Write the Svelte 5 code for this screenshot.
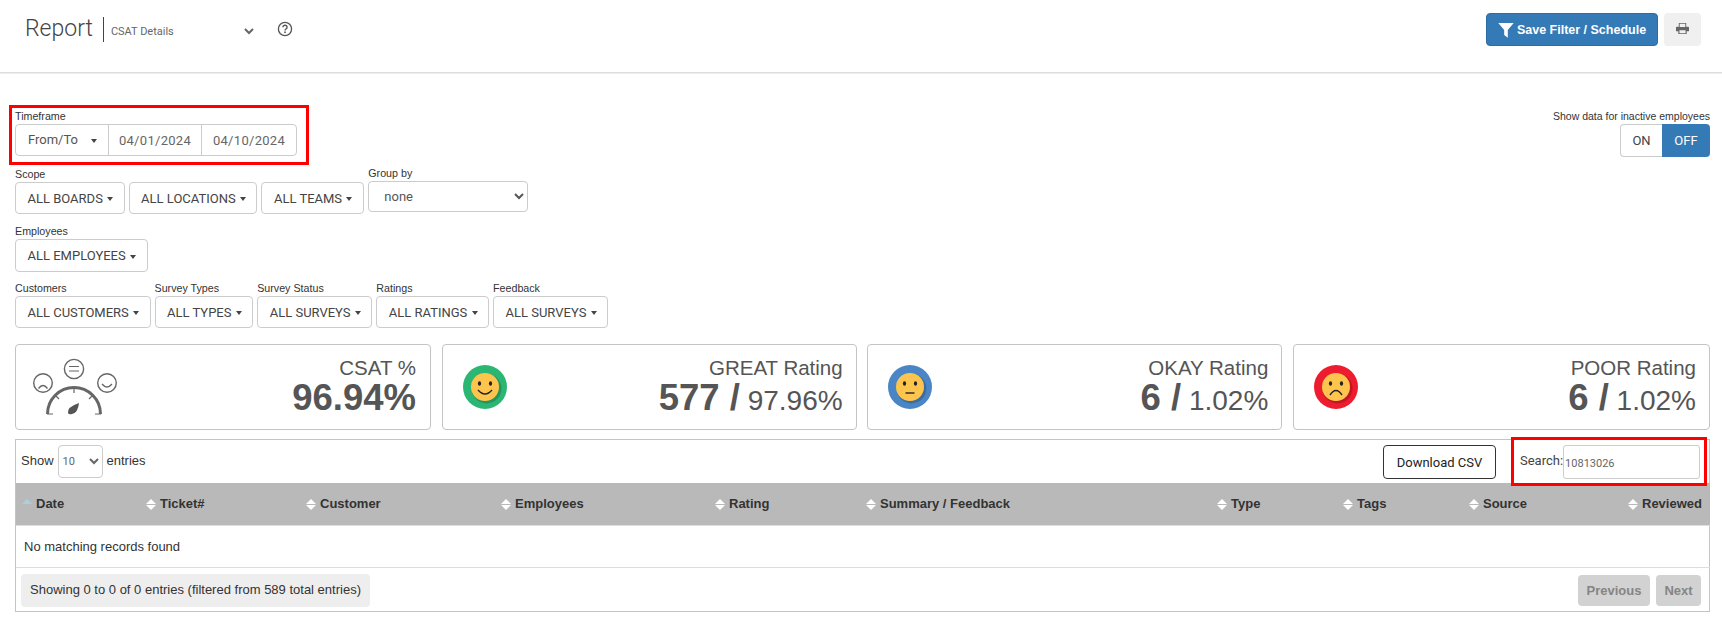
<script>
  const scopeButtons = ['ALL BOARDS', 'ALL LOCATIONS', 'ALL TEAMS'];
  const filterFields = [
    { label: 'Customers', text: 'ALL CUSTOMERS' },
    { label: 'Survey Types', text: 'ALL TYPES' },
    { label: 'Survey Status', text: 'ALL SURVEYS' },
    { label: 'Ratings', text: 'ALL RATINGS' },
    { label: 'Feedback', text: 'ALL SURVEYS' }
  ];
  const ratings = [
    { title: 'GREAT Rating', count: '577', pct: '97.96%', ring: '#2bb673', mouth: 'M-7 3 Q0 11 7 3' },
    { title: 'OKAY Rating', count: '6', pct: '1.02%', ring: '#4a86c5', mouth: 'M-4.5 6 H4.5' },
    { title: 'POOR Rating', count: '6', pct: '1.02%', ring: '#ed1c2e', mouth: 'M-6 8 Q0 -1 6 8' }
  ];
  const columns = [
    { name: 'Date', width: 124, active: true },
    { name: 'Ticket#', width: 160 },
    { name: 'Customer', width: 195 },
    { name: 'Employees', width: 214 },
    { name: 'Rating', width: 151 },
    { name: 'Summary / Feedback', width: 351 },
    { name: 'Type', width: 126 },
    { name: 'Tags', width: 126 },
    { name: 'Source', width: 159 },
    { name: 'Reviewed', width: 88 }
  ];
</script>

<header class="topbar">
  <div class="title-group">
    <h1>Report</h1>
    <span class="divider"></span>
    <select class="report-select"><option>CSAT Details</option></select>
    <svg class="help" viewBox="0 0 16 16" width="16" height="16" aria-hidden="true">
      <circle cx="8" cy="8" r="6.6" fill="none" stroke="#555" stroke-width="1.3" />
      <path d="M5.9 6.3 A2.1 2 0 1 1 8.9 8 Q8 8.5 8 9.6" fill="none" stroke="#555" stroke-width="1.4" />
      <rect x="7.2" y="10.5" width="1.6" height="1.6" fill="#555" />
    </svg>
  </div>
  <div class="top-actions">
    <button class="save">
      <svg viewBox="0 0 16 16" width="16" height="16" aria-hidden="true">
        <path d="M0.3 1 H15.7 L9.8 8 V15.8 L6.2 13 V8 Z" fill="#fff" />
      </svg>
      Save Filter / Schedule
    </button>
    <button class="print" aria-label="Print">
      <svg viewBox="0 0 14 14" width="13" height="13" aria-hidden="true">
        <path fill-rule="evenodd" d="M3 1 H11 V5 H13 Q14 5 14 6 V10 H11.5 V13 H2.5 V10 H0 V6 Q0 5 1 5 H3 Z M4 2 V5.5 H10 V2 Z M3.7 9 V12 H10.3 V9 Z" fill="#666" />
      </svg>
    </button>
  </div>
</header>

<main class="page">
  <div class="first-row">
    <div class="marked timeframe">
      <span class="label">Timeframe</span>
      <div class="date-group">
        <span class="range">From/To <i class="caret"></i></span>
        <input class="date" value="04/01/2024" readonly />
        <input class="date last" value="04/10/2024" readonly />
      </div>
    </div>
    <div class="inactive">
      <span class="label">Show data for inactive employees</span>
      <div class="toggle">
        <span class="on">ON</span>
        <span class="off">OFF</span>
      </div>
    </div>
  </div>

  <div class="filter-row scope-row">
    <div class="field">
      <span class="label">Scope</span>
      <div class="buttons">
        {#each scopeButtons as text}
          <button class="drop">{text} <i class="caret"></i></button>
        {/each}
      </div>
    </div>
    <div class="field group-by">
      <span class="label">Group by</span>
      <select class="group-select"><option>none</option></select>
    </div>
  </div>

  <div class="filter-row employees-row">
    <div class="field">
      <span class="label">Employees</span>
      <button class="drop">ALL EMPLOYEES <i class="caret"></i></button>
    </div>
  </div>

  <div class="filter-row customers-row">
    {#each filterFields as f}
      <div class="field">
        <span class="label">{f.label}</span>
        <button class="drop">{f.text} <i class="caret"></i></button>
      </div>
    {/each}
  </div>

  <section class="cards">
    <div class="card">
      <svg class="gauge" viewBox="0 0 92 62" width="92" height="62" aria-hidden="true">
        <g fill="none" stroke="#666">
          <circle cx="14" cy="26" r="9.3" stroke-width="1.4" />
          <path d="M9.5 31.5 Q14 25.5 18.5 31.5" stroke-width="1.3" />
          <circle cx="45" cy="12" r="9.6" stroke-width="1.4" />
          <path d="M40 9.5 H50 M40 14 H50" stroke-width="1.1" />
          <circle cx="78" cy="26" r="9.3" stroke-width="1.4" />
          <path d="M73 27 Q78 33 83 27" stroke-width="1.3" />
          <path d="M18.5 57 A26.5 26.5 0 0 1 71.5 57" stroke-width="3" />
          <path d="M18 57 H24 M66 57 H72 M45 30 V36 M26 38 L30 42 M64 38 L60 42" stroke-width="1.2" />
        </g>
        <path d="M39 56 Q38 50 50 46 Q49 56 43 57 Q40 58 39 56 Z" fill="#555" />
      </svg>
      <div class="stat first">
        <div class="stat-title">CSAT %</div>
        <div class="stat-value"><b>96.94%</b></div>
      </div>
    </div>
    {#each ratings as r}
      <div class="card">
        <svg class="face" viewBox="-23 -23 46 46" width="46" height="46" aria-hidden="true">
          <circle r="22" fill={r.ring} />
          <circle cx="1.5" cy="1.5" r="15" fill="#000" opacity=".18" />
          <circle r="14" fill="#fdc54e" />
          <ellipse cx="-5.5" cy="-3.5" rx="1.6" ry="2.2" fill="#222" />
          <ellipse cx="5.5" cy="-3.5" rx="1.6" ry="2.2" fill="#222" />
          <path d={r.mouth} fill="none" stroke="#222" stroke-width="1.4" />
        </svg>
        <div class="stat">
          <div class="stat-title">{r.title}</div>
          <div class="stat-value"><b>{r.count} /</b> <span>{r.pct}</span></div>
        </div>
      </div>
    {/each}
  </section>

  <section class="table-box">
    <div class="table-tools">
      <div class="length">
        Show
        <select class="length-select"><option>10</option></select>
        entries
      </div>
      <div class="tools-right">
        <button class="download">Download CSV</button>
        <label class="marked search">
          Search:<input value="10813026" readonly />
        </label>
      </div>
    </div>
    <table>
      <thead>
        <tr>
          {#each columns as c}
            <th style="width: {c.width}px">
              <span class="sort" class:active={c.active}><i class="up"></i><i class="down"></i></span>{c.name}
            </th>
          {/each}
        </tr>
      </thead>
      <tbody>
        <tr><td colspan="10">No matching records found</td></tr>
      </tbody>
    </table>
    <div class="table-foot">
      <div class="info">Showing 0 to 0 of 0 entries (filtered from 589 total entries)</div>
      <div class="pager">
        <button disabled>Previous</button>
        <button disabled>Next</button>
      </div>
    </div>
  </section>
</main>

<style>
  :global(body) {
    background: #fff;
    color: #333;
    font-family: 'Liberation Sans', Arial, sans-serif;
  }
  button, select, input {
    font-family: Roboto, sans-serif;
    box-sizing: border-box;
  }

  .topbar {
    height: 73px;
    box-sizing: border-box;
    border-bottom: 1px solid #ddd;
    box-shadow: 0 1px 0 #eee;
    display: flex;
    justify-content: space-between;
    padding: 13px 21px 0 25px;
  }
  .title-group {
    display: flex;
    align-items: flex-start;
  }
  h1 {
    margin: 2px 0 0;
    font: 300 23px/28px Roboto, sans-serif;
    color: #444;
  }
  .divider {
    width: 1px;
    height: 25px;
    margin: 4px 0 0 10px;
    background: #444;
  }
  .report-select {
    width: 150px;
    height: 24px;
    margin: 6px 0 0 3px;
    border: 0;
    background: #fff;
    font-size: 11px;
    color: #666;
  }
  .help {
    margin: 8px 0 0 20px;
  }
  .top-actions {
    display: flex;
    gap: 6px;
  }
  .save {
    width: 172px;
    height: 33px;
    border: 1px solid #2e6da4;
    border-radius: 4px;
    background: #337ab7;
    color: #fff;
    font: bold 12.5px 'Liberation Sans', Arial, sans-serif;
    display: flex;
    align-items: center;
    justify-content: center;
    gap: 3px;
    padding: 0;
  }
  .print {
    width: 37px;
    height: 33px;
    border: 0;
    border-radius: 4px;
    background: #f0f0f0;
    padding: 0;
  }

  .page {
    padding: 32px 12px 0 15px;
  }
  .label {
    display: block;
    font-size: 10.7px;
    line-height: 12px;
    margin-bottom: 2px;
  }
  .first-row {
    display: flex;
    justify-content: space-between;
  }
  .marked {
    border: 3px solid #f00;
    box-sizing: border-box;
  }
  .timeframe {
    width: 300px;
    height: 60px;
    margin-left: -6px;
    padding: 2px 0 0 3px;
  }
  .date-group {
    display: flex;
    width: 282px;
    height: 32px;
    border: 1px solid #ccc;
    border-radius: 4px;
    box-sizing: border-box;
    font: 13px Roboto, sans-serif;
  }
  .range {
    width: 93px;
    padding-left: 12px;
    box-sizing: border-box;
    line-height: 30px;
    color: #555;
    border-right: 1px solid #ccc;
  }
  .range .caret {
    margin-left: 10px;
  }
  .date {
    width: 93px;
    border: 0;
    border-right: 1px solid #ccc;
    text-align: center;
    color: #666;
    font-size: 13px;
    letter-spacing: .3px;
    padding: 0;
    background: transparent;
    outline: none;
  }
  .date.last {
    width: 94px;
    border-right: 0;
  }
  .caret {
    display: inline-block;
    width: 0;
    height: 0;
    margin-left: 1px;
    vertical-align: middle;
    border-top: 4px solid #444;
    border-left: 3.5px solid transparent;
    border-right: 3.5px solid transparent;
  }
  .inactive {
    padding-top: 5px;
    text-align: right;
  }
  .inactive .label {
    font-size: 10.5px;
  }
  .toggle {
    display: inline-flex;
    width: 90px;
    height: 33px;
    font: 13px/31px Roboto, sans-serif;
    text-align: center;
    box-sizing: border-box;
  }
  .on {
    width: 42px;
    box-sizing: border-box;
    border: 1px solid #ccc;
    border-right: 0;
    border-radius: 4px 0 0 4px;
    color: #444;
  }
  .off {
    width: 48px;
    background: #337ab7;
    border-radius: 0 4px 4px 0;
    color: #fff;
    line-height: 33px;
  }

  .filter-row {
    display: flex;
    gap: 3.5px;
  }
  .scope-row {
    margin-top: 3px;
  }
  .employees-row {
    margin-top: 11px;
  }
  .customers-row {
    margin-top: 10px;
    gap: 4px;
  }
  .buttons {
    display: flex;
    gap: 4px;
  }
  .group-by {
    margin-top: -1px;
    margin-left: 1px;
  }
  .drop {
    height: 32px;
    padding: 0 10.5px 0 11.5px;
    border: 1px solid #ccc;
    border-radius: 4px;
    background: #fff;
    color: #444;
    font-size: 13px;
    white-space: nowrap;
  }
  .employees-row .drop {
    height: 33px;
    padding-right: 11px;
  }
  .group-select {
    width: 160px;
    height: 31px;
    border: 1px solid #ccc;
    border-radius: 4px;
    background: #fff;
    color: #555;
    font-size: 13px;
    padding-left: 11px;
  }

  .cards {
    display: grid;
    grid-template-columns: 416px 415px 415px 417px;
    column-gap: 10.67px;
    margin-top: 16px;
  }
  .card {
    height: 86px;
    box-sizing: border-box;
    border: 1px solid #c4c4c4;
    border-radius: 4px;
    display: flex;
    align-items: center;
    justify-content: space-between;
    padding: 0 13px 0 19px;
    color: #555;
  }
  .gauge {
    margin-left: -6px;
    margin-top: 2px;
  }
  .stat {
    text-align: right;
  }
  .stat.first {
    margin-right: 1px;
  }
  .stat-title {
    font-size: 20.5px;
    line-height: 22px;
    padding-top: 2px;
  }
  .stat-value {
    line-height: 38px;
    font-size: 28px;
  }
  .stat-value b {
    font-size: 36.5px;
  }

  .table-box {
    margin-top: 9px;
    width: 1695px;
    height: 173px;
    box-sizing: border-box;
    border: 1px solid #c4c4c4;
  }
  .table-tools {
    height: 43px;
    display: flex;
    justify-content: space-between;
    padding: 5px 0 0 5px;
    box-sizing: border-box;
  }
  .length {
    font-size: 13px;
    display: flex;
    align-items: flex-start;
    gap: 3px;
    line-height: 31px;
    color: #333;
  }
  .length-select {
    width: 45px;
    height: 33px;
    margin: 0 1px;
    border: 1px solid #ccc;
    border-radius: 4px;
    background: #fff;
    font-size: 11px;
    color: #666;
  }
  .tools-right {
    display: flex;
    align-items: flex-start;
  }
  .download {
    width: 113px;
    height: 34px;
    border: 1px solid #333;
    border-radius: 4px;
    background: #fff;
    color: #222;
    font-size: 13px;
    margin-right: 15px;
  }
  .search {
    width: 196px;
    height: 49px;
    margin: -8px 2px 0 0;
    padding: 5px 0 0 6px;
    display: flex;
    align-items: flex-start;
    font: 13px/32px Roboto, sans-serif;
    color: #444;
    position: relative;
    z-index: 1;
  }
  .search input {
    width: 137px;
    height: 34px;
    border: 1px solid #ccc;
    border-radius: 3px;
    font-size: 11px;
    color: #666;
    padding: 2px 0 0 1px;
    outline: none;
  }

  table {
    width: 100%;
    border-collapse: collapse;
    table-layout: fixed;
    font-size: 13px;
  }
  th {
    height: 42px;
    padding: 0 0 0 6px;
    background: #b9b9b9;
    color: #333;
    text-align: left;
    font-size: 13px;
    white-space: nowrap;
    box-sizing: border-box;
    border-bottom: 1px solid #ddd;
  }
  .sort {
    display: inline-flex;
    flex-direction: column;
    gap: 1px;
    vertical-align: middle;
    margin-right: 4px;
  }
  .sort i {
    display: block;
    width: 0;
    height: 0;
    border-left: 5px solid transparent;
    border-right: 5px solid transparent;
  }
  .sort .up {
    border-bottom: 5px solid #fff;
  }
  .sort .down {
    border-top: 5px solid #fff;
  }
  .sort.active .up {
    border-bottom-color: #a9d0de;
  }
  .sort.active .down {
    border-top-color: transparent;
  }
  td {
    height: 42px;
    padding: 0 0 0 8px;
    box-sizing: border-box;
    border-bottom: 1px solid #ddd;
    color: #333;
  }
  .table-foot {
    display: flex;
    justify-content: space-between;
    padding: 6px 8px 0 5px;
  }
  .info {
    width: 349px;
    height: 33px;
    box-sizing: border-box;
    background: #eee;
    border-radius: 4px;
    font-size: 13px;
    line-height: 32px;
    text-align: center;
    white-space: nowrap;
  }
  .pager {
    display: flex;
    gap: 6px;
    padding-top: 1px;
  }
  .pager button {
    height: 31px;
    border: 0;
    border-radius: 4px;
    background: #d2d2d2;
    color: #858585;
    font: bold 13px 'Liberation Sans', Arial, sans-serif;
    padding: 0;
  }
  .pager button:first-child {
    width: 72px;
  }
  .pager button:last-child {
    width: 45px;
  }
</style>
